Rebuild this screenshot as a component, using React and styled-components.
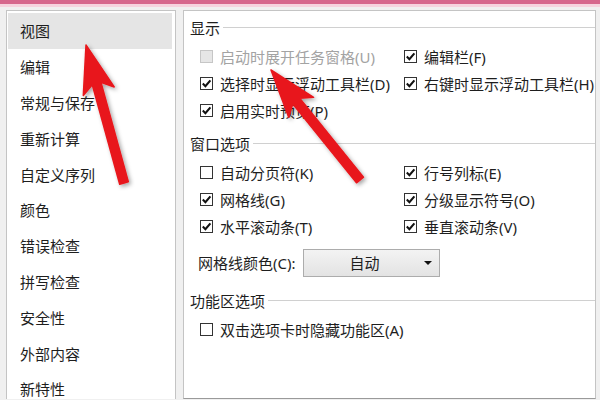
import React from "react";
import styled, { createGlobalStyle } from "styled-components";

const GlobalStyle = createGlobalStyle`
  html, body {
    margin: 0;
    padding: 0;
  }
  *, *::before, *::after {
    box-sizing: border-box;
  }
  body {
    width: 600px;
    height: 400px;
    overflow: hidden;
    background: #f0f0f0;
    font-family: "Segoe UI", "Noto Sans", "Noto Sans CJK SC", sans-serif;
  }
`;

const navItems = [
  "视图",
  "编辑",
  "常规与保存",
  "重新计算",
  "自定义序列",
  "颜色",
  "错误检查",
  "拼写检查",
  "安全性",
  "外部内容",
  "新特性",
];

const sections = [
  {
    title: "显示",
    rows: [
      [
        { label: "启动时展开任务窗格(U)", disabled: true },
        { label: "编辑栏(F)", checked: true },
      ],
      [
        { label: "选择时显示浮动工具栏(D)", checked: true },
        { label: "右键时显示浮动工具栏(H)", checked: true },
      ],
      [{ label: "启用实时预览(P)", checked: true }],
    ],
  },
  {
    title: "窗口选项",
    rows: [
      [
        { label: "自动分页符(K)" },
        { label: "行号列标(E)", checked: true },
      ],
      [
        { label: "网格线(G)", checked: true },
        { label: "分级显示符号(O)", checked: true },
      ],
      [
        { label: "水平滚动条(T)", checked: true },
        { label: "垂直滚动条(V)", checked: true },
      ],
    ],
    dropdown: true,
  },
  {
    title: "功能区选项",
    rows: [[{ label: "双击选项卡时隐藏功能区(A)" }]],
  },
];

// arrow polygon from tip to tail
const arrowPoints = (tip, tail, headLen, headW, shaftW) => {
  const dx = tip[0] - tail[0];
  const dy = tip[1] - tail[1];
  const len = Math.sqrt(dx * dx + dy * dy);
  const ux = dx / len;
  const uy = dy / len;
  const nx = -uy;
  const ny = ux;
  const bx = tip[0] - ux * headLen;
  const by = tip[1] - uy * headLen;
  const nb = tip[0] - ux * (headLen - 8);
  const nby = tip[1] - uy * (headLen - 8);
  const p = (x, y) => `${x.toFixed(1)},${y.toFixed(1)}`;
  return [
    p(tip[0], tip[1]),
    p(bx + nx * headW, by + ny * headW),
    p(nb + nx * shaftW, nby + ny * shaftW),
    p(tail[0] + nx * shaftW, tail[1] + ny * shaftW),
    p(tail[0] - nx * shaftW, tail[1] - ny * shaftW),
    p(nb - nx * shaftW, nby - ny * shaftW),
    p(bx - nx * headW, by - ny * headW),
  ].join(" ");
};

const CheckBox = ({ checked, disabled }) => (
  <Box disabled={disabled}>
    {checked && (
      <svg width="11" height="11" viewBox="0 0 11 11">
        <path
          d="M1.8 5.6 L4.4 8.2 L9.4 2.4"
          fill="none"
          stroke="#111"
          strokeWidth="2.1"
        />
      </svg>
    )}
  </Box>
);

const Option = ({ label, checked, disabled }) => (
  <OptionRow disabled={disabled}>
    <CheckBox checked={checked} disabled={disabled} />
    <span>{label}</span>
  </OptionRow>
);

const App = () => {
  return (
    <>
      <GlobalStyle />
      <Page>
        <TopBar />
        <Body>
          <Nav>
            {navItems.map((item, i) => (
              <NavItem key={item} selected={i === 0}>
                {item}
              </NavItem>
            ))}
          </Nav>
          <Main>
            {sections.map((sec) => (
              <Section key={sec.title} spaced={sec.dropdown}>
                <Heading>
                  <span>{sec.title}</span>
                  <Rule />
                </Heading>
                <Grid>
                  {sec.rows.map((row, r) =>
                    row.map((opt, c) => (
                      <Option key={r + "-" + c} {...opt} />
                    ))
                  )}
                </Grid>
                {sec.dropdown && (
                  <ColorRow>
                    <span>网格线颜色(C):</span>
                    <Select>
                      <span>自动</span>
                      <Caret />
                    </Select>
                  </ColorRow>
                )}
              </Section>
            ))}
          </Main>
        </Body>
        <Overlay width="600" height="400" viewBox="0 0 600 400">
          <defs>
            <filter id="sh" x="-20%" y="-20%" width="140%" height="140%">
              <feDropShadow dx="2" dy="2" stdDeviation="2" floodColor="#000" floodOpacity="0.35" />
            </filter>
          </defs>
          <polygon
            points={arrowPoints([86, 45], [124, 183], 48, 16, 4.5)}
            fill="#e8161b"
            strokeLinejoin="round"
            stroke="#e8161b"
            strokeWidth="1.5"
            filter="url(#sh)"
          />
          <polygon
            points={arrowPoints([271, 70], [360, 180], 48, 16, 4.5)}
            fill="#e8161b"
            strokeLinejoin="round"
            stroke="#e8161b"
            strokeWidth="1.5"
            filter="url(#sh)"
          />
        </Overlay>
      </Page>
    </>
  );
};

const Page = styled.div`
  position: relative;
  width: 600px;
  height: 400px;
  display: flex;
  flex-direction: column;
  background: #f0f0f0;
`;

const TopBar = styled.div`
  height: 7px;
  background: #d6678c;
  border-bottom: 3px solid #f6d3de;
  flex-shrink: 0;
`;

const Body = styled.div`
  flex: 1;
  display: flex;
  gap: 7px;
  padding: 3px 4px 1px 6px;
  min-height: 0;
`;

const Nav = styled.div`
  width: 170px;
  flex-shrink: 0;
  background: #fff;
  border: 1px solid #c4c4c4;
  border-bottom: none;
  padding: 2px 3px 0 1px;
  display: flex;
  flex-direction: column;
  overflow: hidden;
`;

const NavItem = styled.div`
  height: 35.8px;
  flex-shrink: 0;
  display: flex;
  align-items: center;
  padding-left: 12px;
  font-size: 15px;
  color: #1e1e1e;
  background: ${(p) => (p.selected ? "#e5e5e5" : "transparent")};
`;

const Main = styled.div`
  flex: 1;
  min-width: 0;
  background: #fff;
  border: 1px solid #c4c4c4;
  border-bottom: 1px solid #9a9a9a;
  padding: 6px 0 0 6px;
  display: flex;
  flex-direction: column;
`;

const Section = styled.div`
  display: flex;
  flex-direction: column;
  margin-bottom: ${(p) => (p.spaced ? "14px" : "9.5px")};
`;

const Heading = styled.div`
  height: 20px;
  display: flex;
  align-items: center;
  gap: 3px;
  font-size: 15px;
  color: #1e1e1e;
`;

const Rule = styled.div`
  flex: 1;
  height: 1px;
  background: #d0d0d0;
`;

const Grid = styled.div`
  display: grid;
  grid-template-columns: 204px 1fr;
  grid-auto-rows: 27px;
  padding-left: 10px;
  margin-top: 5.5px;
`;

const OptionRow = styled.div`
  display: flex;
  align-items: center;
  gap: 7px;
  font-size: 15px;
  white-space: nowrap;
  color: ${(p) => (p.disabled ? "#a3a3a3" : "#1e1e1e")};
`;

const Box = styled.div`
  width: 13px;
  height: 13px;
  border: 1px solid ${(p) => (p.disabled ? "#c6c6c6" : "#333")};
  background: ${(p) => (p.disabled ? "#e6e6e6" : "#fff")};
  display: flex;
  align-items: center;
  justify-content: center;
  flex-shrink: 0;
`;

const ColorRow = styled.div`
  display: flex;
  align-items: center;
  gap: 7px;
  margin-top: 9px;
  padding-left: 8px;
  font-size: 15px;
  color: #1e1e1e;
`;

const Select = styled.div`
  width: 137px;
  height: 28px;
  border: 1px solid #acacac;
  background: linear-gradient(#f3f3f3, #e3e3e3);
  display: flex;
  align-items: center;
  padding: 0 7px 0 46px;
  justify-content: space-between;
  font-size: 15px;
`;

const Caret = styled.div`
  width: 0;
  height: 0;
  border-left: 4px solid transparent;
  border-right: 4px solid transparent;
  border-top: 4px solid #111;
`;

const Overlay = styled.svg`
  position: absolute;
  left: 0;
  top: 0;
  pointer-events: none;
`;

export default App;
